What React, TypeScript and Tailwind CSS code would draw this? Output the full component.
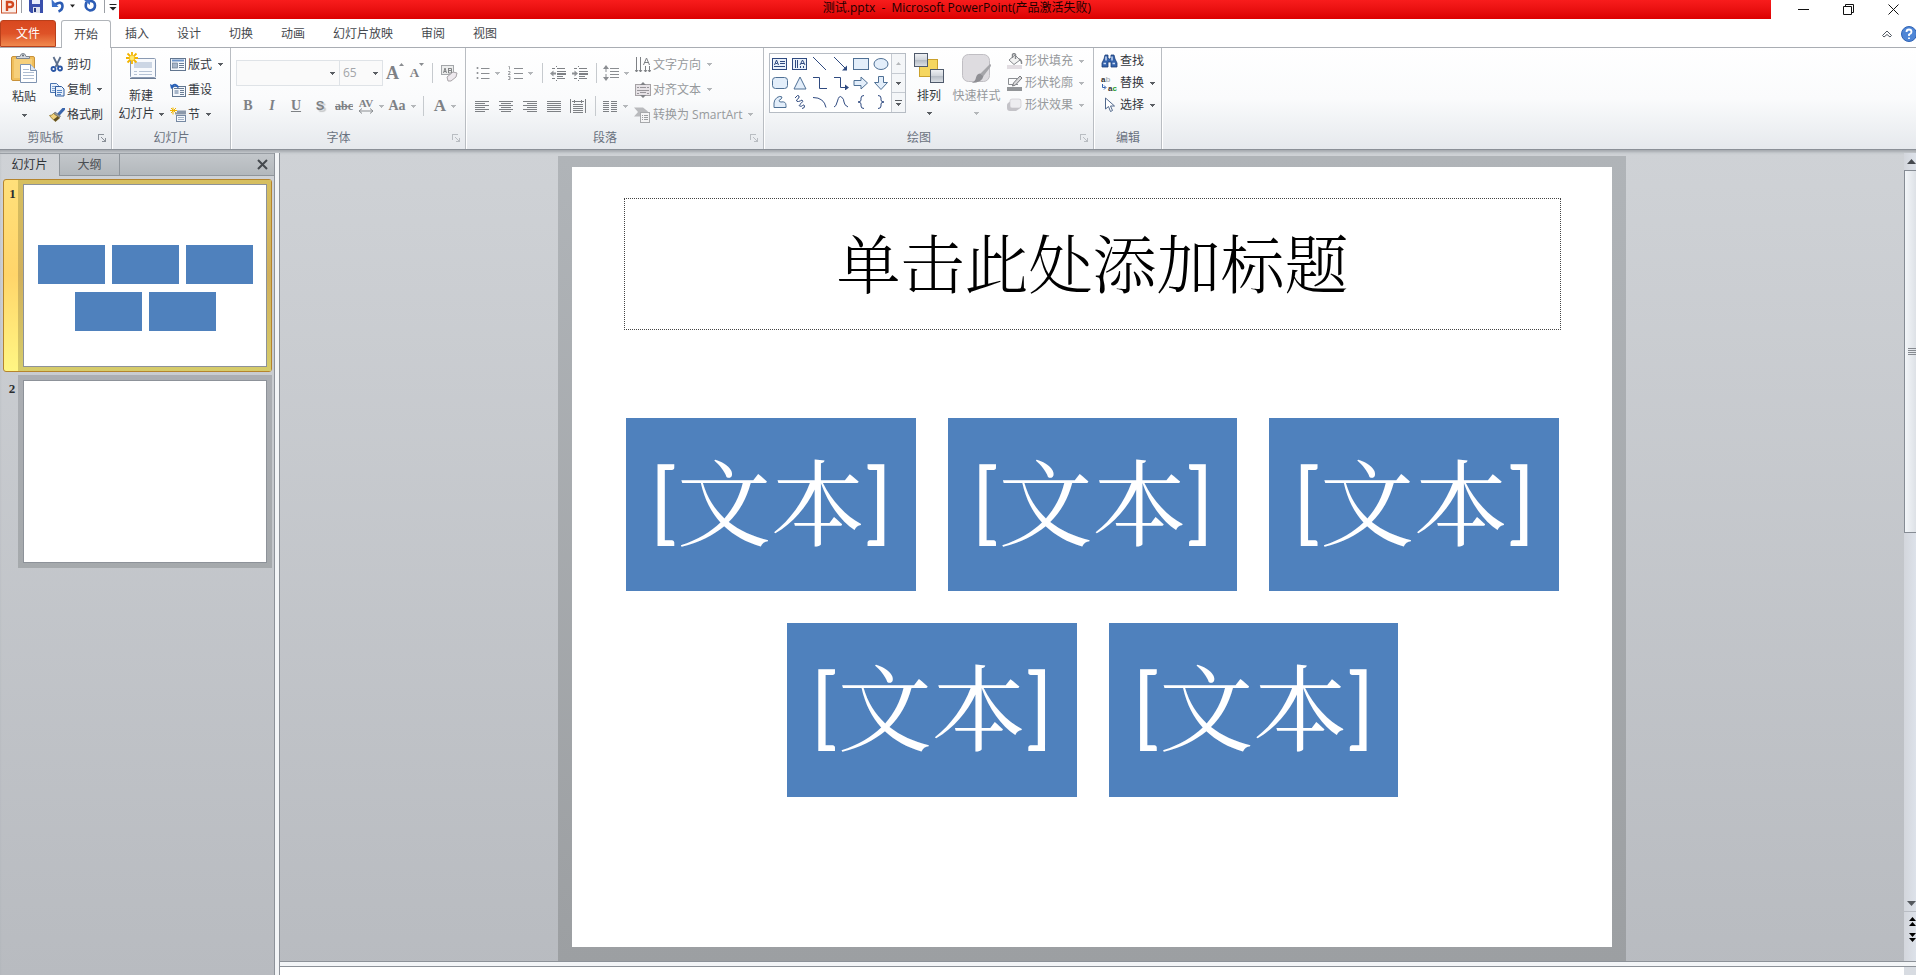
import React from 'react';
import { clsx } from 'clsx';

const menuTabs = ['插入', '设计', '切换', '动画', '幻灯片放映', '审阅', '视图'];

/* ---------- small shared pieces ---------- */

function Caret({ muted = false }: { muted?: boolean }) {
  return (
    <svg width="5" height="3" viewBox="0 0 5 3" shapeRendering="crispEdges" className="shrink-0">
      <path d="M0 0h5v1h-1v1h-1v1h-1v-1h-1v-1h-1z" fill={muted ? '#b4b7ba' : '#5a5e63'} />
    </svg>
  );
}

interface GroupProps {
  label: string;
  launcher?: boolean;
  mutedLauncher?: boolean;
  className?: string;
  children: React.ReactNode;
}

function Group({ label, launcher = false, mutedLauncher = false, className, children }: GroupProps) {
  return (
    <section
      className={clsx(
        'flex shrink-0 flex-col border-r border-[#b9bdc2] shadow-[1px_0_0_#ffffff] mr-px',
        className
      )}
    >
      <div className="flex h-[79px] pt-1">{children}</div>
      <div className={clsx('relative flex h-[22px] items-center justify-center text-[#6a7280]', launcher && 'pr-5')}>
        <span>{label}</span>
        {launcher && (
          <button aria-label={label + '设置'} className="absolute right-[5px] top-[7px]">
            <svg
              width="8"
              height="8"
              fill="none"
              stroke={mutedLauncher ? '#b9bdc2' : '#8a9098'}
              shapeRendering="crispEdges"
            >
              <path d="M0.5 6V0.5H6M3 3l4 4M7.5 3.5v4h-4M5.5 6.5h1M6.5 5.5v1" />
            </svg>
          </button>
        )}
      </div>
    </section>
  );
}

interface RowButtonProps {
  icon: React.ReactNode;
  label: string;
  caret?: boolean;
  muted?: boolean;
  className?: string;
}

function RowButton({ icon, label, caret = false, muted = false, className }: RowButtonProps) {
  return (
    <button
      className={clsx(
        'flex items-center whitespace-nowrap',
        muted ? 'text-[#96999c]' : 'text-[#33373d]',
        className
      )}
    >
      <span className="mr-[2px] flex w-[17px] justify-center">{icon}</span>
      <span className="mr-[6px]">{label}</span>
      {caret && <Caret muted={muted} />}
    </button>
  );
}

interface ToolProps {
  label: string;
  caret?: boolean;
  className?: string;
  children: React.ReactNode;
}

function Tool({ label, caret = false, className = 'w-6', children }: ToolProps) {
  return (
    <button
      aria-label={label}
      className={clsx('flex h-6 shrink-0 items-center justify-center gap-[5px] text-[#7e8185]', className)}
    >
      {children}
      {caret && <Caret muted />}
    </button>
  );
}

function Divider() {
  return (
    <span className="flex w-[10px] shrink-0 justify-center">
      <span className="h-5 w-px bg-[#c6cace]" />
    </span>
  );
}

/* ---------- ribbon icons ---------- */

const PasteIcon = () => (
  <svg width="28" height="32" viewBox="0 0 28 32">
    <rect x="1.500" y="4.500" width="23" height="24" rx="1.5" fill="#f0bf5c" stroke="#c9923a" />
    <rect x="4" y="7" width="18" height="19" fill="#f6cf7a" />
    <path d="M6.500 6.500v-2h3.500q.5-3 3-3t3 3h3.500v2z" fill="#d6dae0" stroke="#7d858f" />
    <circle cx="13" cy="3.500" r="1" fill="#5c646e" />
    <path d="M10.500 12.500h10l6 6v12h-16z" fill="#fff" stroke="#7e93b0" />
    <path d="M20.500 12.500v6h6" fill="#dce6f2" stroke="#7e93b0" />
    <path d="M13 17.500h6M13 20.500h11M13 23.500h11M13 26.500h11" stroke="#aebdd1" />
  </svg>
);

const CutIcon = () => (
  <svg width="14" height="17" viewBox="0 0 14 17" fill="none">
    <path d="M3.500 1l5 10M10.500 1l-5 10" stroke="#5c6f8c" strokeWidth="1.800" />
    <circle cx="3.500" cy="13" r="2" stroke="#2a56a5" strokeWidth="1.800" />
    <circle cx="10" cy="12.500" r="2" stroke="#2a56a5" strokeWidth="1.800" />
  </svg>
);

const CopyIcon = () => (
  <svg width="16" height="15" viewBox="0 0 16 15">
    <path d="M1.500 1.500h6l2 2v7h-8z" fill="#e8f0fa" stroke="#4a74b0" />
    <path d="M3 4.500h4M3 6.500h4M3 8.500h3" stroke="#7fa1cf" />
    <path d="M6.500 4.500h6l2.500 2.500v7h-8.500z" fill="#e8f0fa" stroke="#2d5a9e" />
    <path d="M8 8.500h5M8 10.500h5M8 12.500h4" stroke="#5584c4" />
  </svg>
);

const BrushIcon = () => (
  <svg width="16" height="14" viewBox="0 0 16 14">
    <path d="M15 0.500l-5 5.500" stroke="#3a66ad" strokeWidth="3" strokeLinecap="round" />
    <path d="M6 4l5.500 4-1.500 2L4.500 6z" fill="#8f9399" stroke="#5d6167" strokeWidth=".6" />
    <path d="M4.500 5.500l6 4.500-4 3.500Q3 11 0.500 7.500q2.500 0 4-2z" fill="#f2d27c" stroke="#8c7430" strokeWidth=".8" />
    <path d="M6.500 13.500l4-3.500-2-1.500-4 3z" fill="#5f4e22" />
  </svg>
);

const Spark = () => (
  <g stroke="#f2b400" strokeWidth="1.800">
    <path d="M6 0v12M0 6h12M1.500 1.500l9 9M10.500 1.500l-9 9" />
    <circle cx="6" cy="6" r="1.500" fill="#fff7b0" stroke="#ffe766" />
  </g>
);

const NewSlideIcon = () => (
  <svg width="31" height="28" viewBox="0 0 31 28">
    <rect x="4.500" y="6.500" width="25" height="19" rx="1" fill="#f8fafd" stroke="#8a9ab2" />
    <path d="M4 26.500h26" stroke="#6c7c94" />
    <rect x="8" y="10" width="18" height="6" fill="#ccd6e4" />
    <path d="M8 19.500h3M13 19.500h13M8 22.500h3M13 22.500h13" stroke="#b5c2d4" />
    <Spark />
  </svg>
);

const LayoutIcon = () => (
  <svg width="16" height="14" viewBox="0 0 16 14">
    <rect x=".5" y=".5" width="15" height="12" fill="#f5f8fc" stroke="#62768f" />
    <path d="M2 2.500h12" stroke="#6d94c8" strokeWidth="2" />
    <rect x="2.500" y="5" width="5" height="5" fill="#a7b6c9" stroke="#5c6f88" strokeWidth=".6" />
    <path d="M9 5.500h5M9 7.500h5M9 9.500h5" stroke="#6a7d95" />
  </svg>
);

const ResetIcon = () => (
  <svg width="16" height="16" viewBox="0 0 16 16">
    <rect x="2.500" y="4.500" width="13" height="10" fill="#f5f8fc" stroke="#62768f" />
    <rect x="4.500" y="8" width="4" height="4" fill="#a7b6c9" />
    <path d="M10 8.500h4M10 10.500h4M10 12.500h4M4 6.500h10" stroke="#6a7d95" />
    <path d="M2 4.500Q5 .5 8.500 5.500" fill="none" stroke="#2961b8" strokeWidth="2" />
    <path d="M0 2l1 5 4-2.500z" fill="#2961b8" />
  </svg>
);

const SectionIcon = () => (
  <svg width="16" height="16" viewBox="0 0 16 16">
    <path d="M3 .5v7M0 3.500h7M1 1l5 5M6 1L1 6" stroke="#f0b400" />
    <path d="M7 4.500h9M5 6.500h11" stroke="#8b98aa" strokeWidth="2" />
    <rect x="6.500" y="8.500" width="9" height="6" fill="#f4f7fb" stroke="#7588a2" />
    <path d="M8 10.500h6M8 12.500h6" stroke="#a3b2c6" />
  </svg>
);

const EraserIcon = () => (
  <svg width="17" height="17" viewBox="0 0 17 17">
    <rect x=".5" y=".5" width="12" height="9" fill="#eceded" stroke="#a4a7aa" />
    <path d="M2.500 8l1.500-5 1.500 5M3 6.500h2M7.500 3v5M7.500 3.500h3v4.500h-3M8 5.500h2" stroke="#77797c" fill="none" strokeWidth=".9" />
    <path d="M6 12l6-5 4 1-1 4-5 4H7z" fill="#eee9ee" stroke="#a8a4a8" />
  </svg>
);

function LinesIcon({ d }: { d: string }) {
  return (
    <svg width="16" height="14" viewBox="0 0 16 14" fill="none" stroke="currentColor" shapeRendering="crispEdges">
      <path d={d} />
    </svg>
  );
}

const BulletsIcon = () => (
  <svg width="14" height="14" viewBox="0 0 14 14" stroke="#8a8d91" fill="#8a8d91">
    <path d="M5 2.500h8.500M5 7.500h8.500M5 12.500h8.500" />
    <circle cx="1.500" cy="2" r="1" stroke="none" />
    <circle cx="1.500" cy="7" r="1" stroke="none" />
    <circle cx="1.500" cy="12" r="1" stroke="none" />
  </svg>
);

const NumbersIcon = () => (
  <svg width="15" height="16" viewBox="0 0 15 16" stroke="#8a8d91" fill="none">
    <path d="M6 3.500h9M6 8.500h9M6 13.500h9" />
    <path d="M.5 1.500h1v3M0 6.500h2v1.500l-2 1.500h2.500M0 11.500h2v3H0M1 13h1" strokeWidth=".8" />
  </svg>
);

function IndentIcon({ flip = false }: { flip?: boolean }) {
  return (
    <svg width="16" height="15" viewBox="0 0 16 15">
      <path d="M2 2.500h3M7 2.500h8M7 5.500h9M7 10.500h6M2 12.500h3M7 12.500h8" stroke="#7e8185" />
      <path d="M6.500 0v1M6.500 14v1" stroke="#7e8185" />
      <path d="M7 8h9" stroke="#7e8185" strokeWidth="2" />
      <path d={flip ? 'M6 7.500L2.500 4.500v2H0v2h2.500v2z' : 'M0 7.500l3.500-3v2H6v2H3.500v2z'} fill="#8e9195" />
    </svg>
  );
}

const LineSpacingIcon = () => (
  <svg width="16" height="16" viewBox="0 0 16 16">
    <path d="M7 3.500h9M7 6.500h9M7 9.500h9M7 12.500h9" stroke="#8a8d91" />
    <path d="M3 0l3 4H3.500v3h-1V4H0zM3 16l3-4H3.500V9h-1v3H0z" fill="#8a8d91" />
  </svg>
);

const TextDirectionIcon = () => (
  <svg width="16" height="16" viewBox="0 0 16 16" fill="none" stroke="#7e8185">
    <path d="M1.500 0v15M5.500 0v15M10.500 9v6M14.500 9v6" />
    <path d="M0 13l1.500 2L3 13M4 13l1.500 2L7 13M9 13l1.500 2 1.500-2M13 13l1.500 2 1.500-2" />
    <path d="M8.500 8l3-7 3 7M9.500 5.500h4" />
  </svg>
);

const AlignTextIcon = () => (
  <svg width="16" height="16" viewBox="0 0 16 16">
    <rect x=".5" y="2.500" width="15" height="11" fill="#e6e2e6" stroke="#a5a2a5" />
    <path d="M2 5.500h2M5 5.500h6M12 5.500h2M2 8.500h12M2 11.500h2M12 11.500h2M5 10.500h6" stroke="#98959a" />
    <path d="M8 0l3 3H5zM8 16l3-3H5z" fill="#808286" />
  </svg>
);

const SmartArtIcon = () => (
  <svg width="17" height="16" viewBox="0 0 17 16">
    <path d="M0 .5h9l5 4-5 5H0l4-4.500z" fill="#b9babd" />
    <rect x="6.500" y="5.500" width="9" height="10" fill="#f4f4f5" stroke="#a7a9ac" />
    <path d="M8 8.500h1M10 8.500h4M8 10.500h1M10 10.500h4M8 12.500h1M10 12.500h4" stroke="#9b9da0" />
  </svg>
);

const ArrangeIcon = () => (
  <svg width="32" height="32" viewBox="0 0 32 32">
    <defs>
      <linearGradient id="steel" x1="0" y1="0" x2="0" y2="1">
        <stop offset="0" stopColor="#f0f2f5" />
        <stop offset=".5" stopColor="#cfd4da" />
        <stop offset=".5" stopColor="#b4bbc4" />
        <stop offset="1" stopColor="#dfe3e8" />
      </linearGradient>
    </defs>
    <rect x="6.500" y="6.500" width="18" height="17" fill="#f5d65f" stroke="#caa12c" />
    <rect x="1.500" y=".5" width="13" height="13" fill="url(#steel)" stroke="#4f5a6b" />
    <rect x="17.500" y="16.500" width="13" height="13" fill="url(#steel)" stroke="#4f5a6b" />
  </svg>
);

const QuickStyleIcon = () => (
  <svg width="32" height="32" viewBox="0 0 32 32">
    <rect x="1.500" y="1.500" width="27" height="27" rx="6" fill="#dedce0" stroke="#c0bec3" />
    <path d="M29 11q2 1 0 3.500L22.500 23l-3-2.500z" fill="#a5a5a9" />
    <path d="M19.500 20.500l3 2.500q-1.500 7-12 7 4-2 4.500-5.500 1-4 4.500-4z" fill="#8f8f94" />
  </svg>
);

const FillIcon = () => (
  <svg width="17" height="16" viewBox="0 0 17 16">
    <path d="M3 7l6-5 5 5-6 4.500z" fill="#f2f2f2" stroke="#85888c" />
    <path d="M6.500 5V1.500q1.500-2 3 0V6M13 6q3 1 2.500 5" fill="none" stroke="#85888c" strokeWidth="1.400" />
    <path d="M1 14h15" stroke="#e2dde2" strokeWidth="4" />
  </svg>
);

const OutlineIcon = () => (
  <svg width="17" height="16" viewBox="0 0 17 16">
    <path d="M11 3.500H2.500v6H12" fill="none" stroke="#8b8e92" />
    <path d="M14 1l2 2-6.500 7-3 1 1-3z" fill="#d8d8da" stroke="#77797d" />
    <path d="M1 14h15" stroke="#929598" strokeWidth="4" />
  </svg>
);

const EffectIcon = () => (
  <svg width="17" height="15" viewBox="0 0 17 15">
    <path d="M5 3q0-2 2-2h6q2 0 2 2v5q0 2-2 3l-3 2H4q-3 0-3-3V7q0-1 1-2z" fill="#c4c3c8" />
    <rect x="4" y="1" width="11" height="9" rx="2" fill="#ededf0" stroke="#c6c5ca" strokeWidth=".6" />
  </svg>
);

const FindIcon = () => (
  <svg width="17" height="14" viewBox="0 0 17 14">
    <path d="M4 1h3v3l1 1h1l1-1V1h3l1 4 2 4v4h-6V8H7v5H1V9l2-4z" fill="#3463ac" stroke="#1d3f78" strokeWidth=".8" />
    <path d="M2.500 9.500h2.500M11.500 9.500h2.500M5 2.500v4M11 2.500v4" stroke="#c6d8f2" strokeWidth="1.500" />
  </svg>
);

const ReplaceIcon = () => (
  <svg width="17" height="18" viewBox="0 0 17 18" overflow="visible" fontFamily="Liberation Sans" fontWeight="700" fontSize="8">
    <text x="0" y="8" fill="#333">a<tspan fill="#b2b5b9">b</tspan></text>
    <text x="7" y="17" fill="#333">a<tspan fill="#1b9a2a">c</tspan></text>
    <path d="M1.500 10v3.500h3M3 11.500l2 2-2 2" fill="none" stroke="#3563b0" />
  </svg>
);

const SelectIcon = () => (
  <svg width="12" height="16" viewBox="0 0 12 16">
    <path d="M1.500 1v11l3-2.500 2 5 2-1-2-4.500h4z" fill="#fff" stroke="#52698c" />
  </svg>
);

/* Shapes in the drawing gallery, one 16x14 drawing each */
const shapes: { name: string; art: React.ReactNode }[] = [
  { name: '文本框', art: <><rect x=".5" y="1.500" width="14" height="11" fill="#eaf2fb" /><path d="M2.500 8l2-5 2 5M3.500 6.500h2M8 4.500h5M8 6.500h5M2 9.500h11" /></> },
  { name: '竖排文本框', art: <><rect x=".5" y="1.500" width="14" height="11" fill="#eaf2fb" /><path d="M8 8l2.500-5L13 8M9 6.500h3M3.500 3v8M5.500 3v8M8.500 9v2M11.500 9v2" /></> },
  { name: '直线', art: <path d="M1 0l13 13" /> },
  { name: '箭头', art: <><path d="M1 0l12 12" /><path d="M14 13.500v-5l-5 5z" fill="#2f4a80" stroke="none" /></> },
  { name: '矩形', art: <rect x=".5" y="1.500" width="15" height="11" fill="#e3eefa" stroke="#4f7095" /> },
  { name: '椭圆', art: <ellipse cx="8" cy="7" rx="7" ry="5.500" fill="#e3eefa" stroke="#4f7095" /> },
  { name: '圆角矩形', art: <rect x=".5" y="1.500" width="15" height="11" rx="3" fill="#e3eefa" stroke="#4f7095" /> },
  { name: '三角形', art: <path d="M8 1l6 12H2z" fill="#e3eefa" stroke="#4f7095" /> },
  { name: '肘形连接符', art: <path d="M1 1.500h6.500v11H15" /> },
  { name: '肘形箭头', art: <><path d="M1 1.500h6.500v10H13" /><path d="M12 8.500v6l4-3z" fill="#2f4a80" stroke="none" /></> },
  { name: '右箭头', art: <path d="M1 4.500h7V1l6.500 6L8 13V9.500H1z" fill="#e3eefa" stroke="#4f7095" /> },
  { name: '下箭头', art: <path d="M5.500 0.500h5v6h4L8 13.500 1.500 6.500h4z" fill="#e3eefa" stroke="#4f7095" /> },
  { name: '任意多边形', art: <path d="M2 12.500V8q0-3 3-5.500 3-2 5-.5 0 2-3 3.500 0 1.500 2 1.500 5-1 5 3.500v2z" fill="#e3eefa" stroke="#4f7095" /> },
  { name: '自由曲线', art: <path d="M3 3q3-4 4-2T4.500 5q0 2 2 1.500T10 5q2 1-1 3.500T8 11q1 1 2.500-.5t2 .5-2.500 2.500" /> },
  { name: '弧形', art: <path d="M1 2.500q11 0 13 10" /> },
  { name: '曲线', art: <path d="M1 12Q3 12 4.500 6t4-4T11 7t4 5" /> },
  { name: '左大括号', art: <path d="M11 .5Q8 .5 8 3v2Q8 7 5 7q3 0 3 2v2q0 2.500 3 2.500" /> },
  { name: '右大括号', art: <path d="M5 .5Q8 .5 8 3v2q0 2 3 2-3 0-3 2v2q0 2.500-3 2.500" /> },
];

/* ---------- window chrome ---------- */

function TitleBar() {
  return (
    <header className="flex h-[19px] shrink-0 items-start overflow-hidden bg-white">
      <div className="flex h-[19px] w-[119px] shrink-0">
        <svg width="119" height="19" viewBox="0 0 119 19">
          <rect x="1.500" y="-5" width="15" height="18" fill="#fbeee8" stroke="#c8502a" />
          <path d="M7 11V2h3q3 0 3 2.500T10 7H7" fill="none" stroke="#d2471f" strokeWidth="2.400" />
          <path d="M21.500 0v13M104.500 0v13" stroke="#9b9fa5" />
          <path d="M29 -1h14v14H31l-2-2z" fill="#3a50ad" />
          <path d="M32 -1h8v5h-8z" fill="#e9eefb" />
          <path d="M33 7h7v6h-7z" fill="#dfe3ee" />
          <path d="M34 8h2v4h-2z" fill="#28397f" />
          <path d="M55 4.500q7-4 7.500 1.500 0 4-4 5.500" fill="none" stroke="#2c5cb4" strokeWidth="2.600" />
          <path d="M51.500 -1l.5 8h6.500z" fill="#3d70c8" />
          <path d="M70 4.500h5l-2.500 3z" fill="#222" />
          <path d="M86.500 2q-2.500 7 3.500 8.500 5-.5 5-5T90 1" fill="none" stroke="#2c5cb4" strokeWidth="2.600" />
          <path d="M84 0h6v5z" fill="#3d70c8" />
          <path d="M109.500 4.500h7" stroke="#222" />
          <path d="M109.500 7h7l-3.500 3.500z" fill="#222" />
        </svg>
      </div>
      <div className="flex h-[19px] flex-1 justify-center bg-linear-to-b from-[#f81c1c] to-[#dc0000] pl-6 leading-4 text-[#1c0000]">
        <h1 className="whitespace-pre">测试.pptx  -  Microsoft PowerPoint(产品激活失败)</h1>
      </div>
      <div className="flex pl-[10px]">
        <button aria-label="最小化" className="flex h-[19px] w-[45px] items-center justify-center">
          <svg width="11" height="11" stroke="#111"><path d="M0 5.500h11" /></svg>
        </button>
        <button aria-label="向下还原" className="flex h-[19px] w-[45px] items-center justify-center">
          <svg width="11" height="11" stroke="#111" fill="none"><path d="M.5 2.500h8v8h-8zM2.500 2.500v-2h8v8h-2" /></svg>
        </button>
        <button aria-label="关闭" className="flex h-[19px] w-[45px] items-center justify-center">
          <svg width="11" height="11" stroke="#111"><path d="M.5 .5l10 10M10.500 .5l-10 10" /></svg>
        </button>
      </div>
    </header>
  );
}

function MenuBar() {
  return (
    <nav className="flex h-[29px] shrink-0 items-end border-b border-[#a9adb3] bg-white text-[#45484d]">
      <button className="mr-[5px] h-[27px] w-14 rounded-t-[3px] border border-[#b8401c] bg-linear-to-b from-[#d9481f] via-[#de5227] to-[#f0894e] whitespace-nowrap text-white">
        文件
      </button>
      <button className="-mb-px h-[28px] w-[50px] rounded-t-[3px] border border-b-0 border-[#b1b5ba] bg-white">
        开始
      </button>
      {menuTabs.map((tab) => (
        <button key={tab} className="h-[27px] px-[14px]">
          {tab}
        </button>
      ))}
      <div className="ml-auto flex h-[27px] items-center gap-[9px] overflow-hidden">
        <button aria-label="最小化功能区">
          <svg width="10" height="8" fill="none" stroke="#4f5660"><path d="M.5 5.500L5 1l4.500 4.500L8 7 5 4.500 2 7z" /></svg>
        </button>
        <button aria-label="帮助">
          <svg width="15" height="16" viewBox="0 0 15 16">
            <circle cx="8" cy="8" r="7.500" fill="#4f86d6" stroke="#2f63b5" />
            <path d="M5.500 6q0-2.500 2.500-2.500T10.500 6Q10.500 7.500 8 8.500v1.500M8 11.500v1.500" fill="none" stroke="#fff" strokeWidth="1.800" />
          </svg>
        </button>
      </div>
    </nav>
  );
}

/* ---------- ribbon ---------- */

function Ribbon() {
  return (
    <div className="flex h-[102px] shrink-0 overflow-hidden border-b border-[#8b9097] bg-linear-to-b from-white via-[#fafbfc] to-[#e6e9ed]">
      <Group label="剪贴板" launcher className="w-[112px]">
        <button className="flex w-12 flex-col items-center text-[#33373d]">
          <PasteIcon />
          <span className="mt-1 leading-[18px]">粘贴</span>
          <span className="mt-2"><Caret /></span>
        </button>
        <div className="flex flex-col">
          <RowButton className="h-[25px]" icon={<CutIcon />} label="剪切" />
          <RowButton className="h-[25px]" icon={<CopyIcon />} label="复制" caret />
          <RowButton className="h-[25px]" icon={<BrushIcon />} label="格式刷" />
        </div>
      </Group>

      <Group label="幻灯片" className="w-[118px]">
        <button className="flex w-14 flex-col items-center text-[#33373d]">
          <NewSlideIcon />
          <span className="mt-[7px] leading-[18px]">新建</span>
          <span className="flex items-center gap-1 whitespace-nowrap leading-[18px]">
            幻灯片 <Caret />
          </span>
        </button>
        <div className="flex flex-col">
          <RowButton className="h-[25px]" icon={<LayoutIcon />} label="版式" caret />
          <RowButton className="h-[25px]" icon={<ResetIcon />} label="重设" />
          <RowButton className="h-[25px]" icon={<SectionIcon />} label="节" caret />
        </div>
      </Group>

      <Group label="字体" launcher mutedLauncher className="w-[234px]">
        <div className="flex flex-col pl-1 pt-2">
          <div className="flex items-center">
            <button aria-label="字体" className="flex h-[26px] w-[104px] items-center justify-end border border-[#dfe3e7] bg-[#fafafa] pr-1">
              <Caret />
            </button>
            <button aria-label="字号" className="flex h-[26px] w-[43px] items-center justify-between border border-l-0 border-[#dfe3e7] bg-[#fafafa] pr-1 pl-[3px] text-[#a2a5a9]">
              65 <Caret />
            </button>
            <Tool label="增大字号">
              <span className="flex items-start font-['Liberation_Serif',serif] text-[18px] leading-5 font-bold">
                A<svg width="5" height="3"><path d="M0 3l2.500-3L5 3z" fill="#8a8d91" /></svg>
              </span>
            </Tool>
            <Tool label="减小字号" className="w-5">
              <span className="flex items-start font-['Liberation_Serif',serif] text-[13px] leading-5 font-bold">
                A<svg width="5" height="3"><path d="M0 0l2.500 3L5 0z" fill="#8a8d91" /></svg>
              </span>
            </Tool>
            <Divider />
            <Tool label="清除所有格式"><EraserIcon /></Tool>
          </div>
          <div className="mt-2 flex items-center font-['Liberation_Serif',serif] text-[14px]">
            <Tool label="加粗"><b>B</b></Tool>
            <Tool label="倾斜"><i className="font-bold">I</i></Tool>
            <Tool label="下划线"><u className="font-bold">U</u></Tool>
            <Tool label="文字阴影"><b className="font-['Liberation_Sans',sans-serif] text-[13px] text-shadow-[2px_2px_1px_#c4c6c8]">S</b></Tool>
            <Tool label="删除线"><s className="text-[12px] font-bold">abc</s></Tool>
            <Tool label="字符间距" caret className="w-[30px]">
              <span className="flex flex-col items-center text-[11px] leading-[10px] font-bold">
                AV
                <svg width="16" height="6" fill="none" stroke="#8a8d91"><path d="M1 3h14M4 .5L1 3l3 2.500M12 .5L15 3l-3 2.500" /></svg>
              </span>
            </Tool>
            <Tool label="更改大小写" caret className="w-[32px]"><b>Aa</b></Tool>
            <Divider />
            <Tool label="字体颜色" caret className="w-[34px]"><b className="text-[17px]">A</b></Tool>
          </div>
        </div>
      </Group>

      <Group label="段落" launcher mutedLauncher className="w-[297px]">
        <div className="flex w-[167px] flex-col pt-2">
          <div className="flex h-[26px] items-center pl-1">
            <Tool label="项目符号" caret className="w-[33px]"><BulletsIcon /></Tool>
            <Tool label="编号" caret className="w-[33px]"><NumbersIcon /></Tool>
            <Divider />
            <Tool label="降低列表级别" className="w-[22px]"><IndentIcon /></Tool>
            <Tool label="提高列表级别" className="w-[22px]"><IndentIcon flip /></Tool>
            <Divider />
            <Tool label="行距" caret className="w-[30px]"><LineSpacingIcon /></Tool>
          </div>
          <div className="mt-2 flex items-center pl-[3px]">
            <Tool label="文本左对齐"><LinesIcon d="M1 2.500h14M1 4.500h10M1 6.500h14M1 8.500h10M1 10.500h14M1 12.500h10" /></Tool>
            <Tool label="居中"><LinesIcon d="M1 2.500h14M3 4.500h10M1 6.500h14M3 8.500h10M1 10.500h14M3 12.500h10" /></Tool>
            <Tool label="文本右对齐"><LinesIcon d="M1 2.500h14M5 4.500h10M1 6.500h14M5 8.500h10M1 10.500h14M5 12.500h10" /></Tool>
            <Tool label="两端对齐"><LinesIcon d="M1 2.500h14M1 4.500h14M1 6.500h14M1 8.500h14M1 10.500h14M1 12.500h14" /></Tool>
            <Tool label="分散对齐"><LinesIcon d="M.5 0v14M15.500 0v14M3 5.500h10M3 7.500h10M3 9.500h10M3 11.500h10M3 13.500h10M2 2.500h12M4.500 1v3M11.500 1v3" /></Tool>
            <Divider />
            <Tool label="分栏" caret className="w-[30px]"><LinesIcon d="M1 2.500h6M9 2.500h6M1 4.500h6M9 4.500h6M1 6.500h6M9 6.500h6M1 8.500h6M9 8.500h6M1 10.500h6M9 10.500h6M1 12.500h6M9 12.500h6" /></Tool>
          </div>
        </div>
        <div className="flex flex-col">
          <RowButton muted className="h-[25px]" icon={<TextDirectionIcon />} label="文字方向" caret />
          <RowButton muted className="h-[25px]" icon={<AlignTextIcon />} label="对齐文本" caret />
          <RowButton muted className="h-[25px]" icon={<SmartArtIcon />} label="转换为 SmartArt" caret />
        </div>
      </Group>

      <Group label="绘图" launcher mutedLauncher className="w-[329px]">
        <div className="mt-px ml-1 flex h-[60px] w-[137px] border border-[#b6bcc4] bg-white">
          <div className="grid flex-1 grid-cols-6">
            {shapes.map((shape) => (
              <button key={shape.name} aria-label={shape.name} className="flex items-center justify-center">
                <svg width="16" height="14" viewBox="0 0 16 14" fill="none" stroke="#2f4a80">
                  {shape.art}
                </svg>
              </button>
            ))}
          </div>
          <div className="flex w-[14px] flex-col border-l border-[#c5cad1] bg-[#f4f6f8]">
            <button aria-label="向上滚动" className="flex flex-1 items-center justify-center">
              <svg width="5" height="3"><path d="M0 3l2.500-3L5 3z" fill="#b4b7ba" /></svg>
            </button>
            <button aria-label="向下滚动" className="flex flex-1 items-center justify-center border-y border-[#c5cad1]">
              <Caret />
            </button>
            <button aria-label="其他形状" className="flex flex-1 flex-col items-center justify-center gap-[2px]">
              <span className="h-px w-[7px] bg-[#5a5e63]" />
              <Caret />
            </button>
          </div>
        </div>
        <button className="ml-[3px] flex w-10 flex-col items-center pt-px text-[#33373d]">
          <ArrangeIcon />
          <span className="mt-[2px] leading-[18px]">排列</span>
          <span className="mt-[7px]"><Caret /></span>
        </button>
        <button className="flex w-[55px] flex-col items-center pt-px text-[#96999c]">
          <QuickStyleIcon />
          <span className="mt-[2px] whitespace-nowrap leading-[18px]">快速样式</span>
          <span className="mt-[7px]"><Caret muted /></span>
        </button>
        <div className="-mt-[2px] ml-[2px] flex flex-col">
          <RowButton muted className="h-[22px]" icon={<FillIcon />} label="形状填充" caret />
          <RowButton muted className="h-[22px]" icon={<OutlineIcon />} label="形状轮廓" caret />
          <RowButton muted className="h-[22px]" icon={<EffectIcon />} label="形状效果" caret />
        </div>
      </Group>

      <Group label="编辑" className="w-[67px]">
        <div className="-mt-[2px] ml-[6px] flex flex-col">
          <RowButton className="h-[22px]" icon={<FindIcon />} label="查找" />
          <RowButton className="h-[22px]" icon={<ReplaceIcon />} label="替换" caret />
          <RowButton className="h-[22px]" icon={<SelectIcon />} label="选择" caret />
        </div>
      </Group>
    </div>
  );
}

/* ---------- slide list ---------- */

function SlidePanel() {
  return (
    <aside className="flex w-[275px] shrink-0 flex-col border-r border-[#8d9299]">
      <div className="flex h-[23px] items-stretch border-t border-[#9a9fa5] text-[#4a4d52]">
        <button className="w-[59px] text-[#2f3338] whitespace-nowrap">幻灯片</button>
        <button className="w-[61px] border-x border-b border-[#8f959b] bg-linear-to-b from-[#c3c7cb] to-[#b3b8bc]">大纲</button>
        <div className="flex flex-1 items-center justify-end border-b border-[#8f959b] bg-linear-to-b from-[#c3c7cb] to-[#b3b8bc] pr-[6px]">
          <button aria-label="关闭窗格">
            <svg width="11" height="11" stroke="#45494e" strokeWidth="2"><path d="M1 1l9 9M10 1l-9 9" /></svg>
          </button>
        </div>
      </div>

      <ol className="mt-[3px] flex flex-col gap-[3px] pr-[2px] pl-[3px] font-['Liberation_Serif',serif] text-[13px] leading-4 font-bold text-[#2b2d30]">
        <li className="flex rounded-[3px] border border-[#b5842d] bg-linear-to-b from-[#ffe07a] via-[#ffd56a] to-[#fff683]">
          <span className="w-[14px] pt-[6px] pl-[3px] text-center">1</span>
          <div className="flex-1 bg-linear-to-b from-[#d6bf60] via-[#d1b05c] to-[#d6cc6a] py-1 pr-1 pl-[5px]">
            <div className="flex aspect-[4/3] w-full flex-wrap content-start justify-center gap-x-[7px] gap-y-2 border border-[#8d9299] bg-white px-[13px] pt-[60px]">
              {[1, 2, 3, 4, 5].map((n) => (
                <div key={n} className="h-[39px] w-[67px] bg-[#4f81bd]" />
              ))}
            </div>
          </div>
        </li>
        <li className="flex">
          <span className="w-[15px] pt-[6px] pl-[3px] text-center">2</span>
          <div className="flex-1 bg-linear-to-b from-[#abaeb3] to-[#a5a9ac] p-[5px]">
            <div className="aspect-[4/3] w-full border border-[#8d9299] bg-white" />
          </div>
        </li>
      </ol>
    </aside>
  );
}

/* ---------- editing area ---------- */

function Slide() {
  return (
    <div className="mx-auto h-full bg-linear-to-b from-[#b0b4b8] to-[#9c9fa2] px-[14px] pt-[11px] pb-[14px]">
      <article className="flex aspect-[4/3] h-full flex-col bg-white pt-[31px] pr-[51px] pl-[52px]">
        <h2 className="flex h-[132px] shrink-0 items-center justify-center border border-dotted border-[#444] pb-2 font-['Noto_Serif_CJK_SC','Noto_Sans_CJK_SC',serif] text-[64px] leading-none font-light text-black">
          单击此处添加标题
        </h2>
        <div className="mt-[88px] flex flex-wrap justify-center gap-8">
          {[1, 2, 3, 4, 5].map((n) => (
            <div
              key={n}
              className="flex aspect-[289/173] w-[30.9%] items-center justify-center bg-[#4f81bd] pb-3 font-['Noto_Serif_CJK_SC','Noto_Sans_CJK_SC',serif] text-[94px] leading-none whitespace-nowrap text-white"
            >
              <span className="font-['Lato',sans-serif] text-[88px] font-medium">[</span>
              <span>文本</span>
              <span className="font-['Lato',sans-serif] text-[88px] font-medium">]</span>
            </div>
          ))}
        </div>
      </article>
    </div>
  );
}

function Scrollbar() {
  return (
    <div className="flex w-3 shrink-0 flex-col overflow-hidden bg-linear-to-r from-[#d3d6dc] to-[#dde2ea]">
      <button aria-label="向上滚动" className="flex h-[17px] shrink-0 items-center pl-[3px]">
        <svg width="9" height="5"><path d="M4.500 0L9 5H0z" fill="#45494e" /></svg>
      </button>
      <div className="flex-1">
        <div className="flex h-1/2 flex-col items-end justify-center gap-px border border-r-0 border-[#868c94] bg-linear-to-r from-[#f3f6f9] to-[#dde1e6]">
          <span className="h-px w-2 bg-[#868a90]" />
          <span className="h-px w-2 bg-[#868a90]" />
          <span className="h-px w-2 bg-[#868a90]" />
          <span className="h-px w-2 bg-[#868a90]" />
        </div>
      </div>
      <button aria-label="向下滚动" className="flex h-[15px] shrink-0 items-center pl-[3px]">
        <svg width="9" height="5"><path d="M4.500 5L9 0H0z" fill="#55595e" /></svg>
      </button>
      <div className="flex h-[50px] shrink-0 flex-col gap-[7px] border-t border-[#b9bdc4] pt-[5px] pl-[5px]">
        <button aria-label="上一张幻灯片">
          <svg width="7" height="9"><path d="M3.500 0L7 4H0zM3.500 5L7 9H0z" fill="#000" /></svg>
        </button>
        <button aria-label="下一张幻灯片">
          <svg width="7" height="9"><path d="M3.500 4L7 0H0zM3.500 9L7 5H0z" fill="#000" /></svg>
        </button>
      </div>
    </div>
  );
}

export default function App() {
  return (
    <div className="flex h-screen flex-col overflow-hidden bg-white font-['Open_Sans','Noto_Sans_CJK_SC',sans-serif] text-[12px] leading-4">
      <TitleBar />
      <MenuBar />
      <Ribbon />
      <div className="flex min-h-0 flex-1 bg-linear-to-b from-[#cfd2d6] to-[#b8bbc0]">
        <div className="flex min-h-0 flex-1 pt-[3px] shadow-[inset_0_3px_3px_-1px_#a3a7ac]">
          <SlidePanel />
          <div className="w-1 shrink-0 bg-[#f3f5f7]" />
          <main className="flex min-w-0 flex-1 flex-col border-l border-[#8d9299]">
            <div className="flex min-h-0 flex-1">
              <div className="flex min-w-0 flex-1 pt-[3px]">
                <Slide />
              </div>
              <Scrollbar />
            </div>
            <div className="h-[6px] shrink-0 border-y border-[#8d9299] bg-[#f3f5f7]" />
            <div className="flex h-2 shrink-0">
              <textarea aria-label="备注" className="min-w-0 flex-1 resize-none overflow-hidden bg-white" />
              <div className="w-3 bg-[#d8dce2]" />
            </div>
          </main>
        </div>
      </div>
    </div>
  );
}
